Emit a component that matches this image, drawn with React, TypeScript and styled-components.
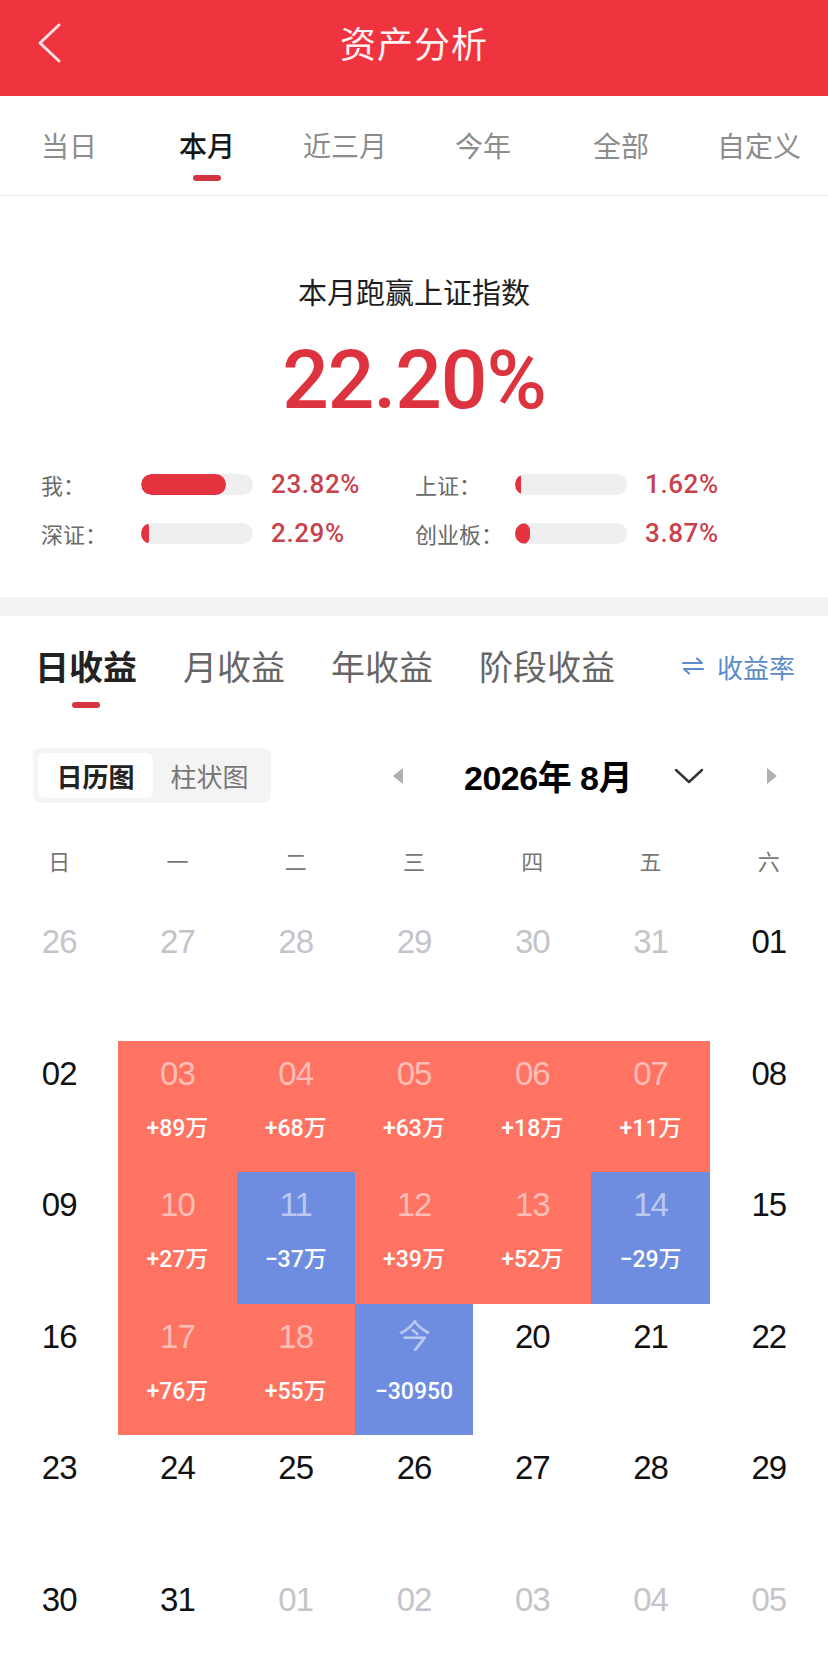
import React from "react";
import styled, { createGlobalStyle } from "styled-components";

const GlobalStyle = createGlobalStyle`
  html, body { margin: 0; padding: 0; background: #ffffff; }
  body { font-family: "Noto Sans CJK SC", "Noto Sans", sans-serif; -webkit-font-smoothing: antialiased; }
  * { box-sizing: border-box; }
`;

const Page = styled.div`
  width: 828px;
  background: #fff;
`;

const Header = styled.header`
  height: 96px;
  padding-bottom: 12px;
  background: #ef333f;
  display: grid;
  grid-template-columns: 110px 1fr 110px;
  align-items: center;
`;

const BackBtn = styled.div`
  padding-left: 36px;
  display: flex;
  align-items: center;
  height: 100%;
`;

const Title = styled.h1`
  margin: 0;
  text-align: center;
  color: #fff2f2;
  font-size: 36px;
  font-weight: 400;
  letter-spacing: 1px;
`;

const TabBar = styled.nav`
  height: 100px;
  display: grid;
  grid-template-columns: repeat(6, 1fr);
  border-bottom: 1px solid #ededed;
`;

const Tab = styled.div<{ $active?: boolean }>`
  display: flex;
  flex-direction: column;
  align-items: center;
  padding-top: 29px;
  font-size: 28px;
  line-height: 40px;
  color: ${(p) => (p.$active ? "#151515" : "#8c8c8c")};
  font-weight: ${(p) => (p.$active ? 500 : 400)};
`;

const TabMark = styled.span`
  margin-top: 10px;
  width: 28px;
  height: 6px;
  border-radius: 3px;
  background: #d4343f;
`;

const Summary = styled.section`
  padding: 77px 0 44px;
  display: flex;
  flex-direction: column;
  align-items: center;
`;

const SummaryTitle = styled.div`
  font-size: 29px;
  line-height: 36px;
  color: #1e1e1e;
`;

const BigNumber = styled.div`
  margin-top: 23px;
  font-family: Roboto, "Noto Sans", sans-serif;
  font-size: 82px;
  line-height: 96px;
  font-weight: 500;
  letter-spacing: -1px;
  color: #dc333f;
`;

const StatsGrid = styled.div`
  margin-top: 36px;
  width: 100%;
  padding-left: 41px;
  display: grid;
  grid-template-columns: 374px 374px;
  row-gap: 9px;
`;

const Stat = styled.div`
  display: flex;
  align-items: center;
  height: 40px;
`;

const StatLabel = styled.span`
  width: 100px;
  font-size: 22px;
  color: #6a6a6a;
`;

const Track = styled.div`
  width: 112px;
  height: 21px;
  border-radius: 11px;
  background: #efeff1;
  overflow: hidden;
`;

const Fill = styled.div`
  height: 100%;
  border-radius: 11px;
  background: #e4333f;
`;

const StatValue = styled.span`
  margin-left: 18px;
  font-family: Roboto, "Noto Sans", sans-serif;
  font-size: 26px;
  letter-spacing: 0.6px;
  font-weight: 500;
  color: #c9414b;
`;

const Band = styled.div`
  height: 19px;
  background: #f3f3f5;
`;

const IncomeTabs = styled.div`
  padding: 28px 33px 0 35px;
  display: flex;
  align-items: flex-start;
  gap: 46px;
`;

const IncomeTab = styled.div<{ $active?: boolean }>`
  display: flex;
  flex-direction: column;
  align-items: center;
  font-size: 34px;
  line-height: 44px;
  color: ${(p) => (p.$active ? "#222" : "#666")};
  font-weight: ${(p) => (p.$active ? 700 : 400)};
`;

const IncomeMark = styled.span`
  margin-top: 14px;
  width: 28px;
  height: 6px;
  border-radius: 3px;
  background: #d4343f;
`;

const RateSwitch = styled.div`
  margin-left: auto;
  display: flex;
  align-items: center;
  gap: 12px;
  height: 44px;
  font-size: 26px;
  color: #5b8bc8;
`;

const ToolRow = styled.div`
  margin-top: 40px;
  padding-left: 33px;
  padding-right: 50px;
  display: flex;
  align-items: center;
`;

const Toggle = styled.div`
  display: flex;
  padding: 5px;
  background: #f4f4f5;
  border-radius: 8px;
  width: 238px;
  height: 55px;
`;

const ToggleItem = styled.div<{ $active?: boolean }>`
  display: flex;
  align-items: center;
  justify-content: center;
  width: ${(p) => (p.$active ? "115px" : "113px")};
  border-radius: 6px;
  font-size: 26px;
  background: ${(p) => (p.$active ? "#fff" : "transparent")};
  color: ${(p) => (p.$active ? "#222" : "#777")};
  font-weight: ${(p) => (p.$active ? 700 : 400)};
`;

const MonthNav = styled.div`
  margin-left: auto;
  display: flex;
  align-items: center;
`;

const MonthText = styled.div`
  margin-left: 60px;
  margin-right: 42px;
  font-family: "Liberation Sans", "Noto Sans CJK SC", sans-serif;
  font-size: 34px;
  font-weight: 700;
  color: #000;
  letter-spacing: -0.5px;
`;

const NavGap = styled.span`
  width: 62px;
`;

const WeekRow = styled.div`
  margin-top: 37px;
  display: grid;
  grid-template-columns: repeat(7, 1fr);
  height: 40px;
  align-items: center;
`;

const WeekDay = styled.div`
  text-align: center;
  font-size: 22px;
  color: #777;
`;

const Grid = styled.div`
  margin-top: 29px;
  display: grid;
  grid-template-columns: repeat(7, 1fr);
  grid-auto-rows: 131.5px;
`;

type Tone = "out" | "in" | "up" | "down";

const Cell = styled.div<{ $tone: Tone }>`
  display: flex;
  flex-direction: column;
  align-items: center;
  padding-top: 15px;
  background: ${(p) => (p.$tone === "up" ? "#fe7362" : p.$tone === "down" ? "#6e8de0" : "transparent")};
`;

const DayNum = styled.div<{ $tone: Tone }>`
  font-family: "Liberation Sans", "Noto Sans CJK SC", sans-serif;
  font-size: 33px;
  letter-spacing: -1px;
  line-height: 36px;
  color: ${(p) =>
    p.$tone === "out" ? "#c4c4ca" : p.$tone === "in" ? "#111" : "rgba(255,255,255,0.55)"};
`;

const Amount = styled.div`
  margin-top: 23px;
  font-family: Roboto, "Noto Sans CJK SC", sans-serif;
  font-size: 23px;
  line-height: 28px;
  font-weight: 500;
  color: #fff;
`;

const BackIcon = () => (
  <svg width="30" height="44" viewBox="0 0 30 44">
    <polyline points="23,5 4,23 23,41" fill="none" stroke="#fde3e3" strokeWidth="3" strokeLinecap="round" strokeLinejoin="round" />
  </svg>
);

const SwapIcon = () => (
  <svg width="24" height="22" viewBox="0 0 24 22">
    <path d="M2 8 H21 L16 3.5" fill="none" stroke="#5b8bc8" strokeWidth="2" strokeLinecap="round" strokeLinejoin="round" />
    <path d="M22 14 H3 L8 18.5" fill="none" stroke="#5b8bc8" strokeWidth="2" strokeLinecap="round" strokeLinejoin="round" />
  </svg>
);

const TriLeft = () => (
  <svg width="12" height="18" viewBox="0 0 12 18">
    <polygon points="11,1 1,9 11,17" fill="#b0b0b0" />
  </svg>
);

const TriRight = () => (
  <svg width="12" height="18" viewBox="0 0 12 18">
    <polygon points="1,1 11,9 1,17" fill="#b0b0b0" />
  </svg>
);

const ChevronDown = () => (
  <svg width="30" height="18" viewBox="0 0 30 18">
    <polyline points="2,3 15,15 28,3" fill="none" stroke="#333" strokeWidth="2.4" strokeLinecap="round" strokeLinejoin="round" />
  </svg>
);

const periodTabs = ["当日", "本月", "近三月", "今年", "全部", "自定义"];

const stats = [
  { label: "我：", pct: 76, min: 0, value: "23.82%" },
  { label: "上证：", pct: 0, min: 6, value: "1.62%" },
  { label: "深证：", pct: 0, min: 8, value: "2.29%" },
  { label: "创业板：", pct: 0, min: 15, value: "3.87%" },
];

type Day = { d: string; tone: Tone; amt?: string };

const o = (d: string): Day => ({ d, tone: "out" });
const i = (d: string): Day => ({ d, tone: "in" });
const u = (d: string, amt: string): Day => ({ d, tone: "up", amt });
const n = (d: string, amt: string): Day => ({ d, tone: "down", amt });

const days: Day[] = [
  o("26"), o("27"), o("28"), o("29"), o("30"), o("31"), i("01"),
  i("02"), u("03", "+89万"), u("04", "+68万"), u("05", "+63万"), u("06", "+18万"), u("07", "+11万"), i("08"),
  i("09"), u("10", "+27万"), n("11", "−37万"), u("12", "+39万"), u("13", "+52万"), n("14", "−29万"), i("15"),
  i("16"), u("17", "+76万"), u("18", "+55万"), n("今", "−30950"), i("20"), i("21"), i("22"),
  i("23"), i("24"), i("25"), i("26"), i("27"), i("28"), i("29"),
  i("30"), i("31"), o("01"), o("02"), o("03"), o("04"), o("05"),
];

export default function App() {
  return (
    <Page>
      <GlobalStyle />
      <Header>
        <BackBtn>
          <BackIcon />
        </BackBtn>
        <Title>资产分析</Title>
        <div />
      </Header>
      <TabBar>
        {periodTabs.map((t) => (
          <Tab key={t} $active={t === "本月"}>
            {t}
            {t === "本月" && <TabMark />}
          </Tab>
        ))}
      </TabBar>
      <Summary>
        <SummaryTitle>本月跑赢上证指数</SummaryTitle>
        <BigNumber>22.20%</BigNumber>
        <StatsGrid>
          {stats.map((s) => (
            <Stat key={s.label}>
              <StatLabel>{s.label}</StatLabel>
              <Track>
                <Fill style={{ width: s.pct ? `${s.pct}%` : `${s.min}px` }} />
              </Track>
              <StatValue>{s.value}</StatValue>
            </Stat>
          ))}
        </StatsGrid>
      </Summary>
      <Band />
      <IncomeTabs>
        <IncomeTab $active>
          日收益
          <IncomeMark />
        </IncomeTab>
        <IncomeTab>月收益</IncomeTab>
        <IncomeTab>年收益</IncomeTab>
        <IncomeTab>阶段收益</IncomeTab>
        <RateSwitch>
          <SwapIcon />
          收益率
        </RateSwitch>
      </IncomeTabs>
      <ToolRow>
        <Toggle>
          <ToggleItem $active>日历图</ToggleItem>
          <ToggleItem>柱状图</ToggleItem>
        </Toggle>
        <MonthNav>
          <TriLeft />
          <MonthText>2026年 8月</MonthText>
          <ChevronDown />
          <NavGap />
          <TriRight />
        </MonthNav>
      </ToolRow>
      <WeekRow>
        {["日", "一", "二", "三", "四", "五", "六"].map((w) => (
          <WeekDay key={w}>{w}</WeekDay>
        ))}
      </WeekRow>
      <Grid>
        {days.map((day, idx) => (
          <Cell key={idx} $tone={day.tone}>
            <DayNum $tone={day.tone}>{day.d}</DayNum>
            {day.amt && <Amount>{day.amt}</Amount>}
          </Cell>
        ))}
      </Grid>
    </Page>
  );
}
